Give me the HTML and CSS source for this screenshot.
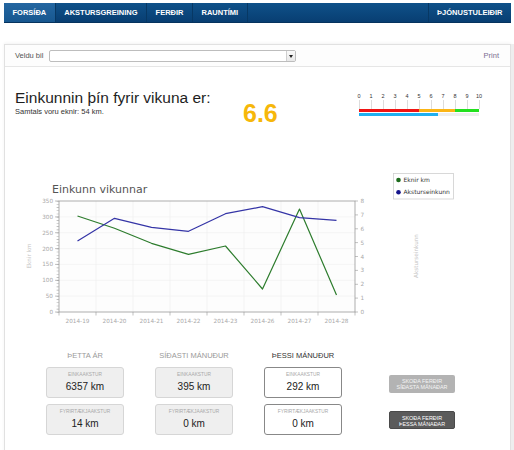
FILE: index.html
```html
<!DOCTYPE html>
<html>
<head>
<meta name="viewport" content="width=device-width, initial-scale=1">
<link rel="stylesheet" href="styles.css">
</head>
<body>

<nav class="topnav">
  <a class="active">FORSÍÐA</a>
  <a>AKSTURSGREINING</a>
  <a>FERÐIR</a>
  <a>RAUNTÍMI</a>
  <a class="right">ÞJÓNUSTULEIÐIR</a>
</nav>

<div class="panel">
  <div class="panel-head">
    <label>Veldu bil</label>
    <div class="select"><span class="select-arrow"></span></div>
    <a class="print">Print</a>
  </div>

  <div class="panel-body">
    <div class="score-row">
      <div class="score-text">
        <h1>Einkunnin þín fyrir vikuna er:</h1>
        <p>Samtals voru eknir: 54 km.</p>
      </div>
      <div class="score-num">6.6</div>
      <div class="scale">
        <div class="scale-nums">
          <span>0</span><span>1</span><span>2</span><span>3</span><span>4</span><span>5</span>
          <span>6</span><span>7</span><span>8</span><span>9</span><span>10</span>
        </div>
        <div class="scale-ticks"></div>
        <div class="scale-bands">
          <span class="band-red"></span><span class="band-orange"></span><span class="band-green"></span>
        </div>
        <div class="scale-track"><div class="scale-value" style="width: 66%"></div></div>
      </div>
    </div>

    <svg class="chart" viewBox="5 165 460 170" width="460" height="170">
      <text class="chart-title" x="52" y="193.3">Einkunn vikunnar</text>

      <rect x="59" y="201" width="296" height="111" fill="#fdfdfd"/>
      <g stroke="#efefef" stroke-width="0.6">
        <line x1="59" x2="355" y1="216.9" y2="216.9"/>
        <line x1="59" x2="355" y1="232.7" y2="232.7"/>
        <line x1="59" x2="355" y1="248.6" y2="248.6"/>
        <line x1="59" x2="355" y1="264.4" y2="264.4"/>
        <line x1="59" x2="355" y1="280.3" y2="280.3"/>
        <line x1="59" x2="355" y1="296.1" y2="296.1"/>
        <line x1="96" x2="96" y1="201" y2="312"/>
        <line x1="133" x2="133" y1="201" y2="312"/>
        <line x1="170" x2="170" y1="201" y2="312"/>
        <line x1="207" x2="207" y1="201" y2="312"/>
        <line x1="244" x2="244" y1="201" y2="312"/>
        <line x1="281" x2="281" y1="201" y2="312"/>
        <line x1="318" x2="318" y1="201" y2="312"/>
      </g>
      <rect x="59" y="201" width="296" height="111" fill="none" stroke="#9a9a9a" stroke-width="0.8"/>

      <!-- axis ticks -->
      <line x1="57.8" x2="57.8" y1="201" y2="312.5" stroke="#aaa" stroke-width="2.4" stroke-dasharray="0.6 2.571"/>
      <path d="M55 201H59M55 216.9H59M55 232.7H59M55 248.6H59M55 264.4H59M55 280.3H59M55 296.1H59M55 312H59" stroke="#999" stroke-width="0.6"/>
      <path d="M355 201H358M355 214.9H358M355 228.8H358M355 242.6H358M355 256.5H358M355 270.4H358M355 284.3H358M355 298.1H358M355 312H358" stroke="#999" stroke-width="0.6"/>
      <path d="M59 312V315.5M96 312V315.5M133 312V315.5M170 312V315.5M207 312V315.5M244 312V315.5M281 312V315.5M318 312V315.5M355 312V315.5" stroke="#999" stroke-width="0.6"/>

      <g class="axis-text" text-anchor="end">
        <text x="53" y="203">350</text>
        <text x="53" y="218.9">300</text>
        <text x="53" y="234.7">250</text>
        <text x="53" y="250.6">200</text>
        <text x="53" y="266.4">150</text>
        <text x="53" y="282.3">100</text>
        <text x="53" y="298.1">50</text>
        <text x="53" y="314">0</text>
      </g>
      <g class="axis-text">
        <text x="360.5" y="203">8</text>
        <text x="360.5" y="216.9">7</text>
        <text x="360.5" y="230.8">6</text>
        <text x="360.5" y="244.6">5</text>
        <text x="360.5" y="258.5">4</text>
        <text x="360.5" y="272.4">3</text>
        <text x="360.5" y="286.3">2</text>
        <text x="360.5" y="300.1">1</text>
        <text x="360.5" y="314">0</text>
      </g>
      <g class="axis-text" text-anchor="middle">
        <text x="77.5" y="322.7">2014-19</text>
        <text x="114.5" y="322.7">2014-20</text>
        <text x="151.5" y="322.7">2014-21</text>
        <text x="188.5" y="322.7">2014-22</text>
        <text x="225.5" y="322.7">2014-23</text>
        <text x="262.5" y="322.7">2014-26</text>
        <text x="299.5" y="322.7">2014-27</text>
        <text x="336.5" y="322.7">2014-28</text>
      </g>

      <text class="axis-title" x="29" y="256" transform="rotate(-90 29 256)">Eknir km</text>
      <text class="axis-title" x="416" y="256" transform="rotate(-90 416 256)">Aksturseinkunn</text>

      <polyline class="line-km" points="77.5,216 114.5,228.3 151.5,243.3 188.5,254.3 225.5,246 262.5,289 299.5,209 336.5,295"/>
      <polyline class="line-score" points="77.5,241 114.5,218.3 151.5,227.3 188.5,231.3 225.5,213.7 262.5,206.7 299.5,217.7 336.5,220.3"/>

      <rect x="393.5" y="173.5" width="60" height="25.5" fill="#fff" stroke="#cfcfcf" stroke-width="0.8"/>
      <circle cx="398.5" cy="180" r="2.3" fill="#1c6b1c"/>
      <circle cx="398.5" cy="192.3" r="2.3" fill="#14148c"/>
      <text class="legend-text" x="403.5" y="182">Eknir km</text>
      <text class="legend-text" x="403.5" y="194.3">Aksturseinkunn</text>
    </svg>

    <div class="stats">
      <div class="stat-col">
        <div class="stat-title">ÞETTA ÁR</div>
        <div class="stat-box">
          <div class="stat-label">EINKAAKSTUR</div>
          <div class="stat-value">6357 km</div>
        </div>
        <div class="stat-box">
          <div class="stat-label">FYRIRTÆKJAAKSTUR</div>
          <div class="stat-value">14 km</div>
        </div>
      </div>
      <div class="stat-col">
        <div class="stat-title">SÍÐASTI MÁNUÐUR</div>
        <div class="stat-box">
          <div class="stat-label">EINKAAKSTUR</div>
          <div class="stat-value">395 km</div>
        </div>
        <div class="stat-box">
          <div class="stat-label">FYRIRTÆKJAAKSTUR</div>
          <div class="stat-value">0 km</div>
        </div>
      </div>
      <div class="stat-col current">
        <div class="stat-title">ÞESSI MÁNUÐUR</div>
        <div class="stat-box">
          <div class="stat-label">EINKAAKSTUR</div>
          <div class="stat-value">292 km</div>
        </div>
        <div class="stat-box">
          <div class="stat-label">FYRIRTÆKJAAKSTUR</div>
          <div class="stat-value">0 km</div>
        </div>
      </div>
      <div class="trip-buttons">
        <button class="trip-btn light">SKOÐA FERÐIR<br>SÍÐASTA MÁNAÐAR</button>
        <button class="trip-btn dark">SKOÐA FERÐIR<br>ÞESSA MÁNAÐAR</button>
      </div>
    </div>
  </div>
</div>

</body>
</html>
```

FILE: styles.css
```css
* {
  box-sizing: border-box;
}

body {
  margin: 0;
  background: #fff;
  font-family: "Liberation Sans", Arial, sans-serif;
  color: #222;
}

.topnav {
  display: flex;
  height: 20px;
  margin: 3px 3px 0 4px;
  background: linear-gradient(#0f5189, #083e72);
  border-bottom: 1px solid #06335e;
}

.topnav a {
  padding: 0 8.5px;
  line-height: 20px;
  font-size: 7.5px;
  font-weight: bold;
  color: #fff;
  border-right: 1px solid #073864;
  cursor: pointer;
}

.topnav a.active {
  background: linear-gradient(#2366a1, #17578f);
}

.topnav a.right {
  margin-left: auto;
  border-right: none;
  border-left: 1px solid #073864;
}

.panel {
  margin: 21px 3px 0 4px;
  min-height: 410px;
  border: 1px solid #e1e1e1;
  box-shadow: 3px 0 0 #eeeeee, 0 -1px 3px rgba(0, 0, 0, 0.05);
}

.panel-head {
  display: flex;
  align-items: center;
  height: 22px;
  padding: 0 11px 0 10px;
  background: #fdfdfd;
  border-bottom: 1px solid #e6e6e6;
  font-size: 7.5px;
}

.panel-head label {
  color: #555;
  margin-right: 5.5px;
}

.select {
  position: relative;
  width: 247px;
  height: 12px;
  border: 1px solid #bdbdbd;
  border-radius: 2px;
  background: #fff;
}

.select-arrow {
  position: absolute;
  right: 0;
  top: 0;
  width: 9px;
  height: 10px;
  border-left: 1px solid #cfcfcf;
  background: linear-gradient(#fafafa, #e8e8e8);
}

.select-arrow:after {
  content: "";
  position: absolute;
  left: 2px;
  top: 4px;
  border-left: 2.5px solid transparent;
  border-right: 2.5px solid transparent;
  border-top: 3px solid #222;
}

.print {
  margin-left: auto;
  color: #7b6f92;
  cursor: pointer;
}

.panel-body {
  padding: 22px 0 0 10px;
}

.score-row {
  display: flex;
  align-items: flex-start;
  height: 76px;
}

.score-text {
  width: 228px;
}

.score-text h1 {
  margin: 0;
  font-size: 15.5px;
  font-weight: normal;
  line-height: 18px;
  color: #1e1e1e;
}

.score-text p {
  margin: 0;
  font-size: 7.5px;
  line-height: 9px;
  color: #333;
}

.score-num {
  width: 116px;
  margin-top: 12px;
  font-size: 25px;
  line-height: 25px;
  font-weight: bold;
  color: #f6b70a;
}

.scale {
  width: 121px;
  margin-top: 4px;
}

.scale-nums {
  display: flex;
  margin-left: -6px;
  width: 133px;
}

.scale-nums span {
  width: 12px;
  text-align: center;
  font-size: 5.5px;
  line-height: 7px;
  color: #333;
}

.scale-ticks {
  height: 9px;
  background: repeating-linear-gradient(to right, #dcdcdc 0 1px, transparent 1px 12px);
}

.scale-bands {
  display: flex;
  width: 120px;
  height: 3px;
}

.band-red { width: 50%; background: #f01414; }
.band-orange { width: 30%; background: #fbb515; }
.band-green { width: 20%; background: #22e01e; }

.scale-track {
  width: 120px;
  height: 3px;
  margin-top: 1px;
  background: #eeeeee;
}

.scale-value {
  height: 100%;
  background: #20b0f0;
}

.chart {
  display: block;
  margin-left: -10px;
}

.chart-title {
  font-family: "DejaVu Sans", Verdana, sans-serif;
  font-size: 11px;
  fill: #555;
}

.axis-text {
  font-family: "DejaVu Sans", Verdana, sans-serif;
  font-size: 5.7px;
  fill: #a8a8a8;
}

.axis-title {
  font-family: "DejaVu Sans", Verdana, sans-serif;
  font-size: 5.7px;
  fill: #c4c4c4;
  text-anchor: middle;
  dominant-baseline: central;
}

.legend-text {
  font-family: "DejaVu Sans", Verdana, sans-serif;
  font-size: 6px;
  fill: #333;
}

.line-km,
.line-score {
  fill: none;
  stroke-width: 1.2;
  stroke-linejoin: round;
}

.line-km { stroke: #2d7c2d; }
.line-score { stroke: #3434a6; }

.stats {
  display: flex;
  align-items: flex-start;
  gap: 31px;
  padding: 16px 0 0 31px;
}

.stat-col {
  width: 78px;
}

.stat-title {
  margin-bottom: 6px;
  font-size: 7.5px;
  line-height: 10px;
  text-align: center;
  color: #9a9a9a;
}

.stat-box {
  height: 31px;
  margin-bottom: 6px;
  padding-top: 4px;
  border: 1px solid #d6d6d6;
  border-radius: 3px;
  background: #efefef;
  text-align: center;
}

.stat-label {
  font-size: 4.8px;
  line-height: 6px;
  color: #a8a8a8;
}

.stat-value {
  margin-top: 2px;
  font-size: 10px;
  line-height: 13px;
  color: #222;
}

.current .stat-title {
  color: #333;
}

.current .stat-box {
  background: #fff;
  border-color: #888;
}

.trip-buttons {
  display: flex;
  flex-direction: column;
  width: 66px;
  margin-left: 16px;
  padding-top: 24px;
}

.trip-btn {
  height: 18px;
  margin-bottom: 18px;
  padding: 3px 0;
  border: none;
  border-radius: 2px;
  font-family: "Liberation Sans", Arial, sans-serif;
  font-size: 5.4px;
  line-height: 6px;
  text-align: center;
  cursor: pointer;
}

.trip-btn.light {
  background: #b3b3b3;
  color: #f4f4f4;
}

.trip-btn.dark {
  background: #5b5b5b;
  color: #fff;
  border: 1px solid #4a4a4a;
}
```
